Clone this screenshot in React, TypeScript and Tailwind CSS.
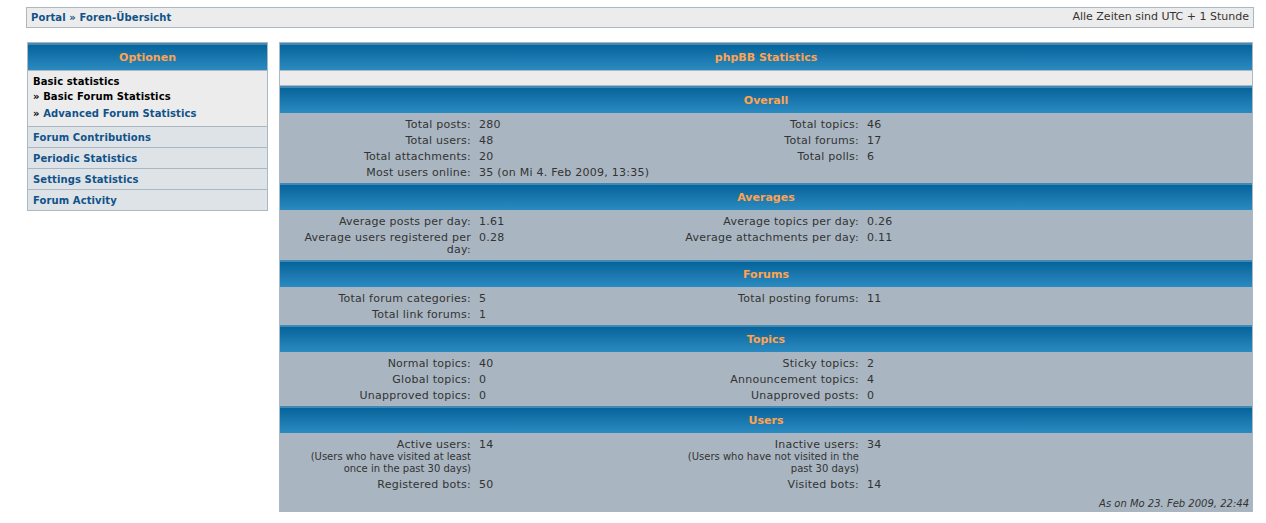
import React from 'react';

type StatRow = {
    label: string;
    value: string;
    note?: string;
};

type StatSection = {
    title: string;
    left: StatRow[];
    right: StatRow[];
    footer?: string;
};

const sections: StatSection[] = [
    {
        title: 'Overall',
        left: [
            { label: 'Total posts:', value: '280' },
            { label: 'Total users:', value: '48' },
            { label: 'Total attachments:', value: '20' },
            { label: 'Most users online:', value: '35 (on Mi 4. Feb 2009, 13:35)' },
        ],
        right: [
            { label: 'Total topics:', value: '46' },
            { label: 'Total forums:', value: '17' },
            { label: 'Total polls:', value: '6' },
        ],
    },
    {
        title: 'Averages',
        left: [
            { label: 'Average posts per day:', value: '1.61' },
            { label: 'Average users registered per day:', value: '0.28' },
        ],
        right: [
            { label: 'Average topics per day:', value: '0.26' },
            { label: 'Average attachments per day:', value: '0.11' },
        ],
    },
    {
        title: 'Forums',
        left: [
            { label: 'Total forum categories:', value: '5' },
            { label: 'Total link forums:', value: '1' },
        ],
        right: [{ label: 'Total posting forums:', value: '11' }],
    },
    {
        title: 'Topics',
        left: [
            { label: 'Normal topics:', value: '40' },
            { label: 'Global topics:', value: '0' },
            { label: 'Unapproved topics:', value: '0' },
        ],
        right: [
            { label: 'Sticky topics:', value: '2' },
            { label: 'Announcement topics:', value: '4' },
            { label: 'Unapproved posts:', value: '0' },
        ],
    },
    {
        title: 'Users',
        left: [
            { label: 'Active users:', value: '14', note: '(Users who have visited at least once in the past 30 days)' },
            { label: 'Registered bots:', value: '50' },
        ],
        right: [
            { label: 'Inactive users:', value: '34', note: '(Users who have not visited in the past 30 days)' },
            { label: 'Visited bots:', value: '14' },
        ],
        footer: 'As on Mo 23. Feb 2009, 22:44',
    },
];

const menuLinks = ['Forum Contributions', 'Periodic Statistics', 'Settings Statistics', 'Forum Activity'];

// blue gradient bar used for every box title
const HeaderBar = ({ title }: { title: string }) => (
    <div className="h-[27px] border-t-[2px] border-[#4189b4] bg-gradient-to-b from-[#04649b] to-[#2a8bc1] flex items-center justify-center">
        <span className="font-bold text-[#ffa34f] text-[11px] leading-none pb-[1px]">{title}</span>
    </div>
);

const Label = ({ row }: { row?: StatRow }) => (
    <div className="text-right pl-[10px] pr-[3px] py-[2px] text-[#333]">
        {row && (
            <>
                <div className="leading-[12px] tracking-[0.25px]">{row.label}</div>
                {row.note && <div className="text-[10px] leading-[12px]">{row.note}</div>}
            </>
        )}
    </div>
);

const Value = ({ row }: { row?: StatRow }) => (
    <div className="pl-[5px] py-[2px] leading-[12px] tracking-[0.25px] text-[#333]">{row?.value}</div>
);

const Section = ({ section }: { section: StatSection }) => {
    const count = Math.max(section.left.length, section.right.length);
    const rows = Array.from({ length: count }, (_, i) => i);

    return (
        <div className="border-t border-[#a9b8c2]">
            <HeaderBar title={section.title} />
            <div className="bg-[#a9b6c1] pt-[4px] pb-[1px]">
                <div className="grid grid-cols-[194px_194px_194px_1fr]">
                    {rows.map((i) => (
                        <React.Fragment key={i}>
                            <Label row={section.left[i]} />
                            <Value row={section.left[i]} />
                            <Label row={section.right[i]} />
                            <Value row={section.right[i]} />
                        </React.Fragment>
                    ))}
                </div>
                {section.footer && (
                    <div className="text-right italic text-[10px] leading-[12px] text-[#333] pr-[3px] pt-[5px] pb-[1px]">
                        {section.footer}
                    </div>
                )}
            </div>
        </div>
    );
};

export default function App() {
    return (
        <div className="min-h-screen bg-white pt-[7px] font-['DejaVu_Sans',Verdana,sans-serif] text-[11px]">
            {/* breadcrumb bar */}
            <div className="ml-[26px] w-[1228px] h-[21px] border border-[#a9b8c2] bg-[#ececec] flex items-center justify-between px-[4px]">
                <div className="font-bold text-[10px] tracking-[0.1px] text-[#105289]">Portal » Foren-Übersicht</div>
                <div className="text-[#333]">Alle Zeiten sind UTC + 1 Stunde</div>
            </div>

            <div className="flex items-start mt-[14px]">
                {/* options menu */}
                <div className="ml-[27px] w-[241px] border border-[#a9b8c2] border-b-0">
                    <HeaderBar title="Optionen" />
                    <div className="bg-[#ececec] border-t border-[#a9b8c2] px-[5px] pt-[4px] pb-[4px] font-bold text-[10px] tracking-[0.1px]">
                        <div className="leading-[14px] text-black">Basic statistics</div>
                        <div className="leading-[16px] text-black">» Basic Forum Statistics</div>
                        <div className="leading-[16px] mt-[1px] text-[#105289]">
                            <span className="text-black">»</span> Advanced Forum Statistics
                        </div>
                    </div>
                    {menuLinks.map((link) => (
                        <div
                            key={link}
                            className="h-[21px] border-t border-[#a9b8c2] bg-[#dee3e7] px-[5px] flex items-center font-bold text-[10px] tracking-[0.1px] text-[#105289] last:h-[22px] last:border-b"
                        >
                            {link}
                        </div>
                    ))}
                </div>

                {/* statistics panel */}
                <div className="ml-[11px] w-[974px] border-x border-t border-[#a9b8c2]">
                    <HeaderBar title="phpBB Statistics" />
                    <div className="h-[15px] bg-[#ececec] border-t border-[#a9b8c2]" />
                    {sections.map((section) => (
                        <Section key={section.title} section={section} />
                    ))}
                </div>
            </div>
        </div>
    );
}
